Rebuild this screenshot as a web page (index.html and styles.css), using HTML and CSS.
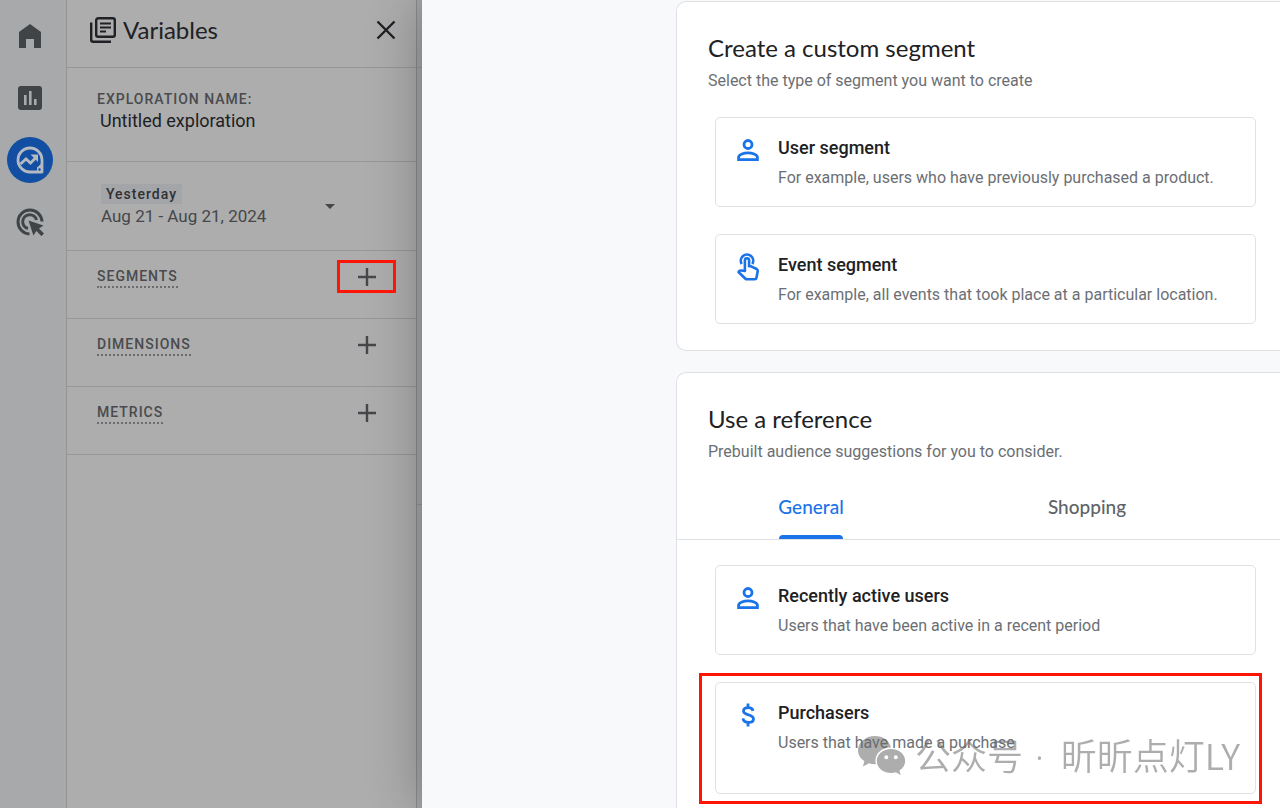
FILE: index.html
```html
<!DOCTYPE html>
<html lang="en">
<head>
<meta charset="utf-8">
<meta name="viewport" content="width=device-width, initial-scale=1">
<title>Explorations – Create a segment</title>
<link rel="stylesheet" href="styles.css">
</head>
<body>
<div class="app">
  <nav class="rail" aria-label="Main">
    <a class="rail-link" href="#home" aria-label="Home">
      <svg width="22" height="24" viewBox="0 0 22 24"><path fill="currentColor" d="M0 8 11 0l11 8v16h-7v-9H7v9H0z"/></svg>
    </a>
    <a class="rail-link" href="#reports" aria-label="Reports">
      <svg width="24" height="24" viewBox="0 0 24 24"><rect width="24" height="24" rx="3" fill="currentColor"/><path d="M6 9h2.600v10H6zM11 5h2.600v14H11zM16 13h2.600v6H16z" fill="#a7a9ab"/></svg>
    </a>
    <a class="rail-link rail-link-active" href="#explore" aria-label="Explore" aria-current="page">
      <svg width="28" height="28" viewBox="0 0 28 28" fill="none" stroke="currentColor" stroke-width="2.800"><path d="M14 2a12 12 0 1 0 0 24h12V14A12 12 0 0 0 14 2z" stroke-linejoin="round"/><path d="m4.500 18 5.500-5 4.500 4 5-5"/><path d="M14.500 8.500H22V16z" fill="currentColor" stroke="none"/><path d="M21 26v-4.500L26 17v9z" fill="currentColor" stroke="none"/><circle cx="23.500" cy="23.500" r="1.200" fill="#124fa3" stroke="none"/></svg>
    </a>
    <a class="rail-link" href="#advertising" aria-label="Advertising">
      <svg width="28" height="28" viewBox="0 0 28 28" fill="none" stroke="currentColor" stroke-width="3"><path d="M13.500 26A12 12 0 1 1 26 13.500"/><path d="M12 20.500A7 7 0 1 1 20.500 12"/><path d="m12.500 12.500 15 5-4.500 3 5 5-2.600 2.600-5-5-3 4.500z" fill="currentColor" stroke="none"/></svg>
    </a>
  </nav>

  <aside class="variables">
    <header class="variables-head">
      <svg width="26" height="26" viewBox="0 0 26 26" fill="none" stroke="currentColor" stroke-width="2.400"><rect x="6.200" y="1.200" width="18.600" height="18.600" rx="2"/><path d="M1.200 5.500v17.300a2 2 0 0 0 2 2H21"/><path d="M10 6.500h11M10 10.500h11M10 14.500h6" stroke-width="2"/></svg>
      <h2 class="variables-title">Variables</h2>
      <button class="icon-button" type="button" aria-label="Close">
        <svg width="20" height="20" viewBox="0 0 20 20" stroke="currentColor" stroke-width="2.400"><path d="m1.500 1.500 17 17m0-17-17 17"/></svg>
      </button>
    </header>
    <section class="name-section">
      <label class="caps-label" for="name">EXPLORATION NAME:</label>
      <input class="name-input" id="name" type="text" value="Untitled exploration">
    </section>
    <section class="date-section">
      <button class="date-button" type="button">
        <span class="date-text"><span class="date-chip">Yesterday</span><span class="date-range">Aug 21 - Aug 21, 2024</span></span>
        <svg width="10" height="5" viewBox="0 0 10 5"><path d="M0 0h10L5 5z" fill="currentColor"/></svg>
      </button>
    </section>
    <section class="variable-row">
      <h3 class="caps-label dashed">SEGMENTS</h3>
      <button class="add-button add-button-marked" type="button" aria-label="Add segment"><svg width="18" height="18" viewBox="0 0 18 18" stroke="currentColor" stroke-width="2.400"><path d="M9 0v18M0 9h18"/></svg></button>
    </section>
    <section class="variable-row">
      <h3 class="caps-label dashed">DIMENSIONS</h3>
      <button class="add-button" type="button" aria-label="Add dimension"><svg width="18" height="18" viewBox="0 0 18 18" stroke="currentColor" stroke-width="2.400"><path d="M9 0v18M0 9h18"/></svg></button>
    </section>
    <section class="variable-row">
      <h3 class="caps-label dashed">METRICS</h3>
      <button class="add-button" type="button" aria-label="Add metric"><svg width="18" height="18" viewBox="0 0 18 18" stroke="currentColor" stroke-width="2.400"><path d="M9 0v18M0 9h18"/></svg></button>
    </section>
  </aside>

  <div class="backdrop-edge"><div class="edge-head"></div><div class="edge-body"></div></div>

  <main class="sheet">
    <section class="card">
      <h1 class="card-title">Create a custom segment</h1>
      <p class="card-note">Select the type of segment you want to create</p>
      <div class="options">
        <button class="option" type="button">
          <svg class="option-icon" width="24" height="28" viewBox="0 0 24 28" fill="none" stroke="currentColor" stroke-width="2.800"><circle cx="12" cy="8.500" r="4"/><path d="M2.600 23.600v-2.300c0-3 5.600-4.500 9.400-4.500s9.400 1.500 9.400 4.500v2.300z"/></svg>
          <span class="option-text"><span class="option-name">User segment</span><span class="option-note">For example, users who have previously purchased a product.</span></span>
        </button>
        <button class="option" type="button">
          <svg class="option-icon" width="24" height="28" viewBox="0 0 24 28" fill="none" stroke="currentColor" stroke-width="2.600"><path d="M5.700 11A6.200 6.200 0 1 1 16.300 11"/><path d="M8.900 18V7.300a2.100 2.100 0 0 1 4.200 0v6h2l5.500 2.700c1 .6 1.300 1.400 1.100 2.300l-1.200 6.500c-.2 1-.8 1.500-1.800 1.500H11c-.8 0-1.300-.3-1.800-.8L2.500 19l1-1.200c.5-.4 1-.4 1.700-.3z" stroke-linejoin="round"/></svg>
          <span class="option-text"><span class="option-name">Event segment</span><span class="option-note">For example, all events that took place at a particular location.</span></span>
        </button>
      </div>
    </section>

    <section class="card card-last">
      <h2 class="card-title">Use a reference</h2>
      <p class="card-note">Prebuilt audience suggestions for you to consider.</p>
      <div class="tabs" role="tablist">
        <button class="tab tab-active" type="button" role="tab" aria-selected="true">General</button>
        <button class="tab" type="button" role="tab" aria-selected="false">Shopping</button>
      </div>
      <div class="options">
        <button class="option" type="button">
          <svg class="option-icon" width="24" height="28" viewBox="0 0 24 28" fill="none" stroke="currentColor" stroke-width="2.800"><circle cx="12" cy="8.500" r="4"/><path d="M2.600 23.600v-2.300c0-3 5.600-4.500 9.400-4.500s9.400 1.500 9.400 4.500v2.300z"/></svg>
          <span class="option-text"><span class="option-name">Recently active users</span><span class="option-note">Users that have been active in a recent period</span></span>
        </button>
        <button class="option option-marked" type="button">
          <svg class="option-icon" width="24" height="28" viewBox="0 0 24 28" fill="none" stroke="currentColor" stroke-width="2.800"><path d="M12 2.500v4M12 21.500v4M17 9.800c-.5-2-2.300-3.100-4.800-3.100-2.800 0-4.700 1.300-4.700 3.400 0 5 10 2.500 10 7.800 0 2.200-2 3.500-5 3.500-3.200 0-5.200-1.500-5.500-4"/></svg>
          <span class="option-text"><span class="option-name">Purchasers</span><span class="option-note">Users that have made a purchase</span></span>
        </button>
      </div>
    </section>
  </main>
</div>

<div class="watermark">
  <svg width="48" height="40" viewBox="0 0 48 40"><path fill="currentColor" d="M17 0C7.500 0 0 6.300 0 14.200c0 4.500 2.500 8.300 6.300 10.900L5 30.500l6-3.200c2 .6 4.500 1 7 .9-2.500-8.700 4.500-16.700 15-16.700C31.500 4.800 25 0 17 0z"/><path fill="currentColor" fill-rule="evenodd" d="M33 13c-8 0-14.200 5.300-14.200 12S25 37 33 37c1.700 0 3.300-.2 4.800-.7l4.900 2.700-1.300-4.500c3.500-2.200 5.800-5.500 5.800-9.500 0-6.700-6.200-12-14.200-12zm-4.700 6.300a2 2 0 1 1 0 4 2 2 0 0 1 0-4zm9.500 0a2 2 0 1 1 0 4 2 2 0 0 1 0-4z"/></svg>
  <span lang="zh-CN">公众号 <span class="watermark-dot">·</span> 昕昕点灯LY</span>
</div>
</body>
</html>
```
FILE: styles.css
```css
* { box-sizing: border-box; }

body {
  margin: 0;
  overflow: hidden;
  font-family: Roboto, "Liberation Sans", sans-serif;
  color: #202124;
}

h1, h2, h3, p { margin: 0; }

button {
  margin: 0;
  padding: 0;
  border: 0;
  background: none;
  color: inherit;
  font: inherit;
  text-align: left;
  cursor: pointer;
}

svg { display: block; flex: none; }

.app {
  display: flex;
  height: 100vh;
}

/* Left rail */
.rail {
  flex: none;
  width: 67px;
  padding: 13px 7px;
  display: flex;
  flex-direction: column;
  gap: 16px;
  border-right: 1px solid #939393;
  background: #a7a9ab;
}

.rail-link {
  width: 46px;
  height: 46px;
  display: grid;
  place-items: center;
  border-radius: 50%;
  color: #414447;
}

.rail-link-active {
  background: #124fa3;
  color: #b5bac2;
}

/* Variables panel */
.variables {
  flex: none;
  width: 349px;
  background: #adadad;
}

.variables-head {
  height: 68px;
  padding: 0 20px 8px 23px;
  display: flex;
  align-items: center;
  gap: 7px;
  border-bottom: 1px solid #979797;
}

.variables-title {
  flex: 1;
  font-family: Lato, sans-serif;
  font-size: 24px;
  line-height: 32px;
  font-weight: 400;
}

.icon-button { color: #202124; }

.caps-label {
  color: #494b4e;
  font-size: 14px;
  line-height: 18px;
  font-weight: 500;
  letter-spacing: 1px;
}

.name-section {
  height: 94px;
  padding: 22px 30px 0;
  display: flex;
  flex-direction: column;
  border-bottom: 1px solid #979797;
}

.name-input {
  width: 100%;
  padding: 0 3px;
  border: 0;
  background: none;
  color: #202124;
  font-family: inherit;
  font-size: 18px;
  line-height: 26px;
}

.date-section {
  padding: 22px 81px 22px 34px;
  border-bottom: 1px solid #979797;
}

.date-button {
  width: 100%;
  display: flex;
  align-items: center;
  justify-content: space-between;
  color: #45474a;
}

.date-text {
  display: flex;
  flex-direction: column;
  align-items: flex-start;
}

.date-chip {
  padding: 0 5px;
  background: #a3a5a8;
  color: #303134;
  font-size: 14px;
  line-height: 20px;
  font-weight: 500;
  letter-spacing: 1px;
}

.date-range {
  font-size: 17px;
  line-height: 24px;
}

.variable-row {
  height: 68px;
  padding: 9px 20px 0 30px;
  display: flex;
  align-items: flex-start;
  justify-content: space-between;
  border-bottom: 1px solid #979797;
}

.dashed {
  margin-top: 7px;
  padding-bottom: 1px;
  border-bottom: 2px dotted #6a6c6e;
}

.add-button {
  width: 59px;
  height: 33px;
  display: grid;
  place-items: center;
  color: #45474a;
}

.add-button-marked {
  position: relative;
  z-index: 1;
  outline: 3px solid #ff1408;
  outline-offset: -3px;
}

.backdrop-edge {
  flex: none;
  width: 6px;
  display: flex;
  flex-direction: column;
  border-left: 1px solid #8c8c8c;
  background: #a5a6a8;
}

.edge-head { height: 68px; border-bottom: 1px solid #939393; }
.edge-body { height: 437px; border-bottom: 1px solid #939393; }

/* Segment sheet */
.sheet {
  position: relative;
  flex: 1;
  min-width: 0;
  padding: 1px 0 0 254px;
  display: flex;
  flex-direction: column;
  gap: 21px;
  background: #f8f9fb;
  box-shadow: 0 0 50px rgba(0, 0, 0, 0.3);
}

.card {
  flex: none;
  padding-bottom: 26px;
  border: 1px solid #dfe1e5;
  border-right: 0;
  border-radius: 10px 0 0 10px;
  background: #fff;
}

.card-last { padding-bottom: 32px; }

.card-title {
  padding: 29px 31px 0;
  font-family: Lato, sans-serif;
  font-size: 24px;
  line-height: 34px;
  font-weight: 400;
}

.card-note {
  padding: 5px 31px 0;
  color: #6b6f74;
  font-size: 16px;
  line-height: 22px;
}

.options {
  padding: 25px 24px 0 38px;
  display: flex;
  flex-direction: column;
  gap: 27px;
}

.option {
  position: relative;
  min-height: 90px;
  padding: 18px 20px 16px;
  display: flex;
  align-items: flex-start;
  gap: 18px;
  border: 1px solid #dfe1e5;
  border-radius: 5px;
  background: #fff;
}

.option-marked { min-height: 112px; }

.option-marked::after {
  content: "";
  position: absolute;
  inset: -10px -7px -11px -17px;
  border: 3px solid #ff1408;
}

.option-icon { color: #1a73e8; }

.option-text {
  display: flex;
  flex-direction: column;
  gap: 6px;
}

.option-name {
  font-size: 18px;
  line-height: 24px;
  font-weight: 500;
}

.option-note {
  color: #6b6f74;
  font-size: 16px;
  line-height: 24px;
}

.tabs {
  margin-top: 11px;
  display: flex;
  gap: 8px;
  border-bottom: 1px solid #dfe1e5;
}

.tab {
  position: relative;
  width: 268px;
  height: 65px;
  color: #5f6368;
  font-family: Lato, sans-serif;
  font-size: 19px;
  line-height: 24px;
  font-weight: 500;
  text-align: center;
}

.tab-active { color: #1a73e8; }

.tab-active::after {
  content: "";
  position: absolute;
  bottom: 0;
  left: 50%;
  width: 64px;
  height: 4px;
  margin-left: -32px;
  border-radius: 4px 4px 0 0;
  background: #1a73e8;
}

.watermark {
  position: fixed;
  right: 40px;
  bottom: 27px;
  display: flex;
  align-items: center;
  gap: 9px;
  color: rgba(105, 105, 105, 0.55);
  font-family: "Noto Sans CJK SC", sans-serif;
  font-size: 36px;
  line-height: 48px;
  font-weight: 350;
  pointer-events: none;
}

.watermark-dot {
  padding: 0 9px 0 4px;
  font-family: "Noto Sans", sans-serif;
}
```
